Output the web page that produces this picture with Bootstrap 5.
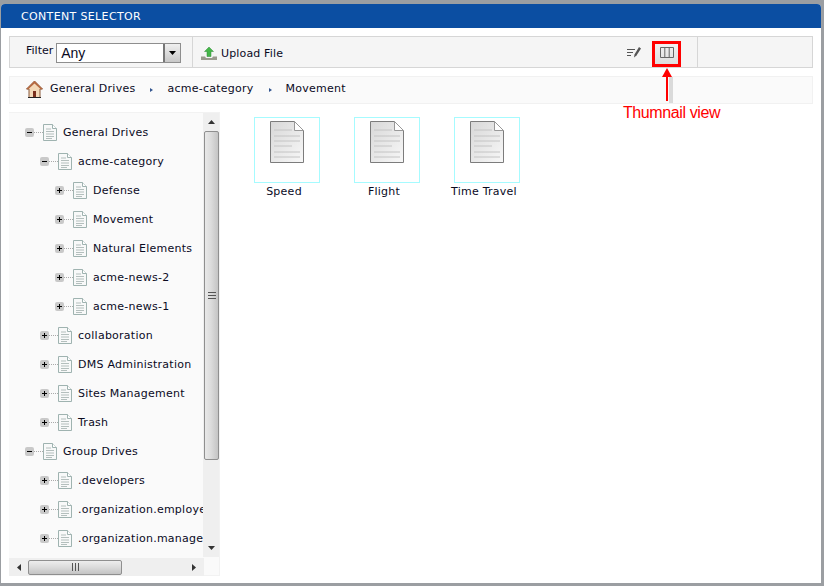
<!DOCTYPE html>
<html lang="en">
<head>
<meta charset="UTF-8">
<title>Content Selector</title>
<link rel="stylesheet" href="https://cdn.jsdelivr.net/npm/bootstrap@5.3.0/dist/css/bootstrap.min.css">
<style>
    html, body { height: 100%; }
    body { background: #9b9ea2; padding: 4px 3px 3px 1px; font-family: "DejaVu Sans", Verdana, sans-serif; font-size: 11px; letter-spacing: .25px; color: #0a0a1e; overflow: hidden; }
    .win { height: 579px; background: #fff; border-radius: 4px 4px 0 0; position: relative; }
    .win-head { height: 24px; background: #0b4ea2; color: #fff; padding-left: 20px; line-height: 25px; border-radius: 4px 4px 0 0; font-size: 11px; letter-spacing: .35px; }
    .win-body { padding: 8px 8px 7px 8px; }

    .tools { height: 32px; background: #f5f5f5; border: 1px solid #d6d6d6; }
    .tool-filter { width: 183px; border-right: 1px solid #d6d6d6; padding-left: 16px; }
    .filter-label { margin-top: -2px; margin-right: 2px; letter-spacing: 0; }
    .fake-select { width: 125px; height: 20px; background: #fff; border: 1px solid #8e8e8e; font-size: 14px; font-family: "Liberation Sans", sans-serif; letter-spacing: 0; padding-left: 4px; line-height: 19px; margin-top: 1px; margin-left: 1px; }
    .fake-select-btn { width: 17px; height: 18px; border-left: 2px solid #777; background: linear-gradient(#f0f0f0, #c8c8c8); }
    .tool-upload { padding: 2px 0 0 8px; gap: 4px; }
    .tool-upload span { padding-top: 2px; letter-spacing: .15px; }
    .tool-views { padding-right: 19px; gap: 14px; }
    .tool-end { width: 115px; border-left: 1px solid #d6d6d6; }
    .view-btn { width: 23px; height: 23px; background: linear-gradient(#f4f4f4, #dedede); }

    .crumbs { height: 28px; margin-top: 8px; background: #fafafa; border: 1px solid #f1f1f1; padding: 0 0 2px 16px; gap: 7px; }
    .crumbs .breadcrumb { gap: 32px; }
    .crumbs .breadcrumb-item { padding: 0; position: relative; }
    .crumbs .breadcrumb-item + .breadcrumb-item::before { content: ""; position: absolute; left: -17px; top: 7px; padding: 0; border-left: 3px solid #33558f; border-top: 2px solid transparent; border-bottom: 2px solid transparent; }

    .panes { margin-top: 8px; height: 464px; }
    .side { width: 211px; height: 464px; flex: none; background: #fafafa; border: 1px solid #f2f2f2; border-left: 0; }
    .side-main { height: 444px; }
    .tree { width: 195px; padding-top: 6px; overflow: hidden; white-space: nowrap; }
    .tree-row { height: 29px; margin-left: 16px; }
    .depth-1 { padding-left: 15px; }
    .depth-2 { padding-left: 30px; }
    .toggle { width: 9px; height: 9px; margin-top: -2px; background: #c9c9c9; border-radius: 2px; position: relative; flex: none; }
    .toggle::before { content: ""; position: absolute; left: 2px; top: 4px; width: 5px; height: 1px; background: #000; }
    .toggle.closed::after { content: ""; position: absolute; left: 4px; top: 2px; width: 1px; height: 5px; background: #000; }
    .tree-dots { width: 9px; height: 1px; margin-top: -2px; border-top: 1px dotted #aaa; flex: none; }
    .tree-icon { flex: none; margin: -2px 6px 0 0; }

    .sb { background: #efefef; }
    .sb-v { width: 16px; }
    .sb-h { height: 18px; margin-top: 1px; width: 195px; }
    .sb-arrow { flex: none; }
    .sb-arrow-up { margin: 7px 0; }
    .sb-arrow-down { margin: auto 0 7px; }
    .sb-arrow-left { margin: 0 7px 0 8px; }
    .sb-thumb-v { height: 329px; width: 15px; margin-left: 1px; border: 1px solid #8f8f8f; border-radius: 2px; background: linear-gradient(90deg, #e8e8e8, #dcdcdc 45%, #c4c4c4); }
    .sb-thumb-h { height: 15px; width: 94px; border: 1px solid #8f8f8f; border-radius: 2px; background: linear-gradient(#ededed, #dcdcdc 45%, #c4c4c4); }

    .files { padding: 5px 0 0 34px; }
    .file-item { width: 100px; }
    .file-box { width: 66px; height: 66px; border: 1px solid #a6fbff; padding-top: 3px; }
    .file-name { margin-top: 1px; width: 60px; white-space: nowrap; justify-content: center; }

    .note-box { position: absolute; left: 651px; top: 37px; width: 29px; height: 26px; border: 3px solid #f00; }
    .note-arrow { position: absolute; left: 655px; top: 63px; }
    .note-text { position: absolute; left: 622px; top: 99px; color: #f00; font-family: "Liberation Sans", sans-serif; font-size: 16px; line-height: 20px; letter-spacing: -.4px; white-space: nowrap; }
</style>
</head>
<body>
<svg width="0" height="0" class="position-absolute">
    <symbol id="doc" viewBox="0 0 14 17">
        <path d="M.5.5h9l4 4v12H.5z" fill="#f8f9f9" stroke="#9fb3b0"/>
        <path d="M9.500.5v4h4" fill="#fff" stroke="#9fb3b0"/>
        <path d="M3 5h5M3 7.500h8M3 10h8M3 12.500h8M3 14.500h6" stroke="#b4bfbd"/>
    </symbol>
    <symbol id="bigdoc" viewBox="0 0 34 42">
        <path d="M.5.500h24l9 9v32H.5z" fill="url(#docfill)" stroke="#7c7c7c"/>
        <path d="M24.500.500v9h9z" fill="#fff" stroke="#999"/>
        <path d="M4 9h18M4 15h26M4 20h26M4 25h18M4 31h26M4 36h26" stroke="#c4c4c4"/>
    </symbol>
    <linearGradient id="docfill" x1="0" y1="0" x2="1" y2="1">
        <stop offset="0" stop-color="#d8d8d8"/>
        <stop offset="1" stop-color="#f8f8f8"/>
    </linearGradient>
</svg>

<div class="win">
    <div class="win-head">CONTENT SELECTOR</div>
    <div class="win-body">
        <div class="tools d-flex">
            <div class="tool-filter d-flex align-items-center">
                <span class="filter-label">Filter</span>
                <div class="fake-select d-flex justify-content-between">
                    <span>Any</span>
                    <span class="fake-select-btn d-flex align-items-center justify-content-center">
                        <svg width="7" height="4" viewBox="0 0 7 4"><path d="M0 0h7L3.500 4z" fill="#000"/></svg>
                    </span>
                </div>
            </div>
            <div class="tool-upload d-flex align-items-center flex-grow-1">
                <svg width="16" height="13" viewBox="0 0 16 13">
                    <path d="M0 9.500h4l1 1.500h6l1-1.500h4V13H0z" fill="#9a9a8e"/>
                    <path d="M8 0l4.500 4.500H10V9.500H6V4.500H3.500z" fill="#45b649" stroke="#2c8a35" stroke-width=".5"/>
                </svg>
                <span>Upload File</span>
            </div>
            <div class="tool-views d-flex align-items-center">
                <svg width="14" height="11" viewBox="0 0 14 11">
                    <path d="M0 2.500h8M0 5.500h6M0 8.500h4" stroke="#555" fill="none"/>
                    <path d="M12 0l2 1.500-4.500 7L7 10.500l.5-3z" fill="#555"/>
                </svg>
                <span class="view-btn d-flex align-items-center justify-content-center">
                    <svg width="14" height="11" viewBox="0 0 14 11">
                        <path d="M.5.500h13v10H.5zM4.800.500v10M9.200.500v10" fill="none" stroke="#666"/>
                    </svg>
                </span>
            </div>
            <div class="tool-end"></div>
        </div>

        <nav class="crumbs d-flex align-items-center">
            <svg width="17" height="18" viewBox="0 0 17 18">
                <path d="M8.500 1L.5 9h2.500v8.500h11V9h2.500z" fill="#f3d9b8" stroke="#8a5a3c"/>
                <path d="M8.500 1L.5 9l1.500.5 6.500-6 6.500 6 1.500-.5z" fill="#b5673f"/>
                <path d="M7 11h3v6.500H7z" fill="#7a2e1c"/>
                <path d="M2 17.500h13" stroke="#222"/>
            </svg>
            <ol class="breadcrumb mb-0">
                <li class="breadcrumb-item">General Drives</li>
                <li class="breadcrumb-item">acme-category</li>
                <li class="breadcrumb-item">Movement</li>
            </ol>
        </nav>

        <div class="panes d-flex">
            <div class="side">
                <div class="side-main d-flex">
                    <ul class="tree list-unstyled mb-0">
                        <li class="tree-row d-flex align-items-center"><span class="toggle"></span><span class="tree-dots"></span><svg class="tree-icon" width="14" height="17"><use href="#doc"/></svg>General Drives</li>
                        <li class="tree-row depth-1 d-flex align-items-center"><span class="toggle"></span><span class="tree-dots"></span><svg class="tree-icon" width="14" height="17"><use href="#doc"/></svg>acme-category</li>
                        <li class="tree-row depth-2 d-flex align-items-center"><span class="toggle closed"></span><span class="tree-dots"></span><svg class="tree-icon" width="14" height="17"><use href="#doc"/></svg>Defense</li>
                        <li class="tree-row depth-2 d-flex align-items-center"><span class="toggle closed"></span><span class="tree-dots"></span><svg class="tree-icon" width="14" height="17"><use href="#doc"/></svg>Movement</li>
                        <li class="tree-row depth-2 d-flex align-items-center"><span class="toggle closed"></span><span class="tree-dots"></span><svg class="tree-icon" width="14" height="17"><use href="#doc"/></svg>Natural Elements</li>
                        <li class="tree-row depth-2 d-flex align-items-center"><span class="toggle closed"></span><span class="tree-dots"></span><svg class="tree-icon" width="14" height="17"><use href="#doc"/></svg>acme-news-2</li>
                        <li class="tree-row depth-2 d-flex align-items-center"><span class="toggle closed"></span><span class="tree-dots"></span><svg class="tree-icon" width="14" height="17"><use href="#doc"/></svg>acme-news-1</li>
                        <li class="tree-row depth-1 d-flex align-items-center"><span class="toggle closed"></span><span class="tree-dots"></span><svg class="tree-icon" width="14" height="17"><use href="#doc"/></svg>collaboration</li>
                        <li class="tree-row depth-1 d-flex align-items-center"><span class="toggle closed"></span><span class="tree-dots"></span><svg class="tree-icon" width="14" height="17"><use href="#doc"/></svg>DMS Administration</li>
                        <li class="tree-row depth-1 d-flex align-items-center"><span class="toggle closed"></span><span class="tree-dots"></span><svg class="tree-icon" width="14" height="17"><use href="#doc"/></svg>Sites Management</li>
                        <li class="tree-row depth-1 d-flex align-items-center"><span class="toggle closed"></span><span class="tree-dots"></span><svg class="tree-icon" width="14" height="17"><use href="#doc"/></svg>Trash</li>
                        <li class="tree-row d-flex align-items-center"><span class="toggle"></span><span class="tree-dots"></span><svg class="tree-icon" width="14" height="17"><use href="#doc"/></svg>Group Drives</li>
                        <li class="tree-row depth-1 d-flex align-items-center"><span class="toggle closed"></span><span class="tree-dots"></span><svg class="tree-icon" width="14" height="17"><use href="#doc"/></svg>.developers</li>
                        <li class="tree-row depth-1 d-flex align-items-center"><span class="toggle closed"></span><span class="tree-dots"></span><svg class="tree-icon" width="14" height="17"><use href="#doc"/></svg>.organization.employees</li>
                        <li class="tree-row depth-1 d-flex align-items-center"><span class="toggle closed"></span><span class="tree-dots"></span><svg class="tree-icon" width="14" height="17"><use href="#doc"/></svg>.organization.management</li>
                    </ul>
                    <div class="sb sb-v d-flex flex-column align-items-center">
                        <svg class="sb-arrow sb-arrow-up" width="7" height="4" viewBox="0 0 7 4"><path d="M3.500 0L7 4H0z" fill="#333"/></svg>
                        <div class="sb-thumb-v d-flex align-items-center justify-content-center">
                            <svg width="8" height="7" viewBox="0 0 8 7"><path d="M0 .5h8M0 3.500h8M0 6.500h8" stroke="#555"/></svg>
                        </div>
                        <svg class="sb-arrow sb-arrow-down" width="7" height="4" viewBox="0 0 7 4"><path d="M0 0h7L3.500 4z" fill="#333"/></svg>
                    </div>
                </div>
                <div class="sb sb-h d-flex align-items-center">
                    <svg class="sb-arrow sb-arrow-left" width="4" height="7" viewBox="0 0 4 7"><path d="M4 0v7L0 3.500z" fill="#333"/></svg>
                    <div class="sb-thumb-h d-flex align-items-center justify-content-center">
                        <svg width="7" height="8" viewBox="0 0 7 8"><path d="M.5 0v8M3.500 0v8M6.500 0v8" stroke="#555"/></svg>
                    </div>
                    <svg class="sb-arrow ms-auto me-2" width="4" height="7" viewBox="0 0 4 7"><path d="M0 0v7l4-3.500z" fill="#333"/></svg>
                </div>
            </div>

            <div class="files d-flex align-items-start">
                <div class="file-item">
                    <div class="file-box text-center"><svg width="34" height="42"><use href="#bigdoc"/></svg></div>
                    <div class="file-name d-flex">Speed</div>
                </div>
                <div class="file-item">
                    <div class="file-box text-center"><svg width="34" height="42"><use href="#bigdoc"/></svg></div>
                    <div class="file-name d-flex">Flight</div>
                </div>
                <div class="file-item">
                    <div class="file-box text-center"><svg width="34" height="42"><use href="#bigdoc"/></svg></div>
                    <div class="file-name d-flex">Time Travel</div>
                </div>
            </div>
        </div>
    </div>

    <div class="note-box"></div>
    <svg class="note-arrow" width="24" height="36" viewBox="0 0 24 36">
        <path d="M15 10v26" stroke="#bbb" stroke-width="4" opacity=".5"/>
        <path d="M11 9v25" stroke="#f00" stroke-width="2" fill="none"/>
        <path d="M11 1l5 9H6z" fill="#f00"/>
    </svg>
    <div class="note-text">Thumnail view</div>
</div>
</body>
</html>
